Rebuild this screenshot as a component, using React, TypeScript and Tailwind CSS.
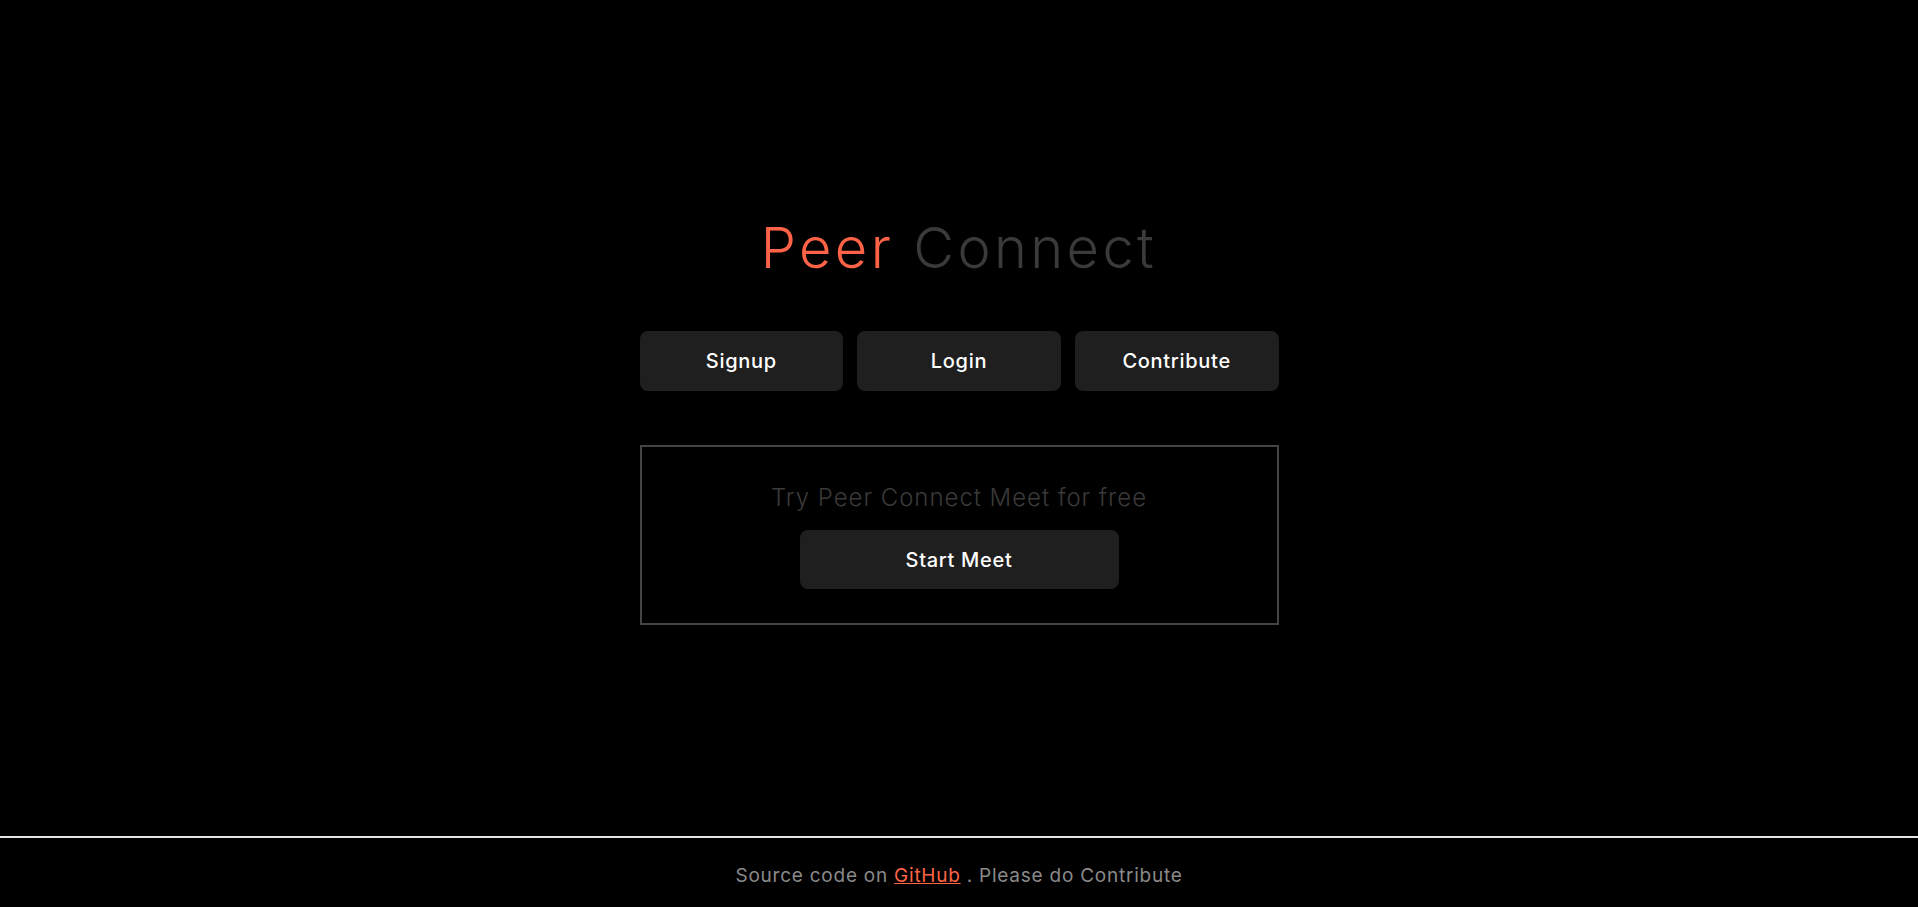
export default function App() {
  const font = { fontFamily: 'Inter, "Noto Sans", sans-serif' };

  return (
    <div className="flex min-h-screen flex-col bg-black" style={font}>
      {/* Hero */}
      <main className="flex h-[836px] flex-col items-center justify-center pt-[9px]">
        <h1 className="text-[56px] font-light leading-none tracking-[0.06em]">
          <span className="text-[#ff6347]">Peer</span>{' '}
          <span className="text-[#3a3a3a]">Connect</span>
        </h1>

        <div className="mt-[55px] grid w-[639px] grid-cols-3 gap-[14px]">
          {['Signup', 'Login', 'Contribute'].map((label) => (
            <button
              key={label}
              className="h-[60px] rounded-lg bg-[#1f1f1f] text-[20px] font-medium tracking-[0.035em] text-white"
            >
              {label}
            </button>
          ))}
        </div>

        <section className="mt-[54px] flex h-[180px] w-[639px] flex-col items-center border-2 border-[#444444] pt-[36px]">
          <p className="text-[24px] font-light leading-[30px] tracking-[0.04em] text-[#3a3a3a]">
            Try Peer Connect Meet for free
          </p>
          <button className="mt-[17px] h-[59px] w-[319px] rounded-lg bg-[#1f1f1f] text-[20px] font-medium tracking-[0.035em] text-white">
            Start Meet
          </button>
        </section>
      </main>

      {/* Footer */}
      <footer className="flex h-[71px] items-center justify-center border-t-2 border-[#e5e5e5] pt-[7px] text-[19px] tracking-[0.04em] text-[#8a8a8a]">
        <span>
          Source code on{' '}
          <a href="#" className="text-[#ff6347] underline">
            GitHub
          </a>{' '}
          . Please do Contribute
        </span>
      </footer>
    </div>
  );
}
